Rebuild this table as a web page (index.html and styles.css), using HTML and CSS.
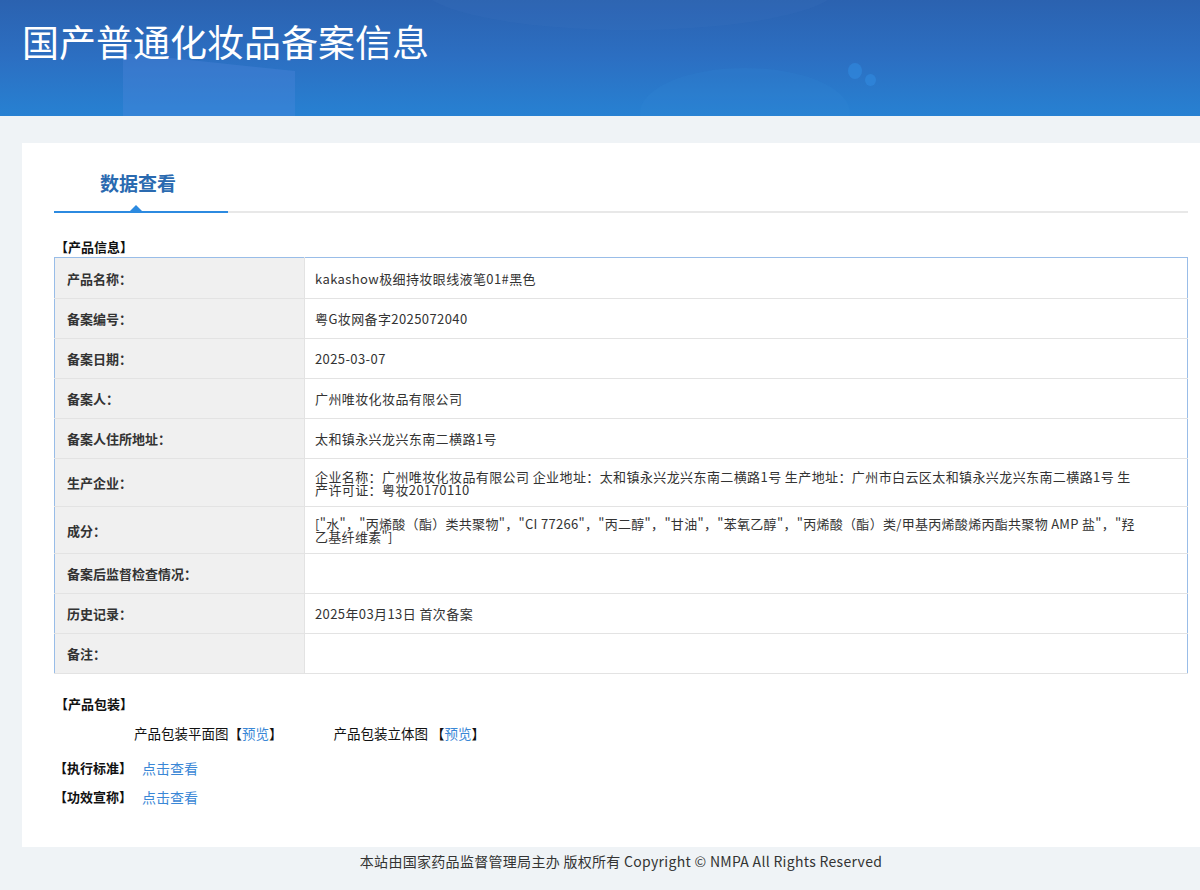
FILE: index.html
```html
<!DOCTYPE html>
<html lang="zh">
<head>
<meta charset="utf-8">
<title>国产普通化妆品备案信息</title>
<link rel="stylesheet" href="styles.css">
</head>
<body>
<header class="banner">
  <span class="deco deco-a"></span>
  <span class="deco deco-b"></span>
  <span class="deco deco-c"></span>
  <span class="dot dot-1"></span>
  <span class="dot dot-2"></span>
  <h1 class="banner-title">国产普通化妆品备案信息</h1>
</header>
<main class="page">
  <div class="tabs">
    <div class="tab active">数据查看</div>
  </div>
  <h2 class="sec-title">【产品信息】</h2>
  <table class="info">
    <tr class="first"><th>产品名称：</th><td>kakashow极细持妆眼线液笔01#黑色</td></tr>
    <tr><th>备案编号：</th><td>粤G妆网备字2025072040</td></tr>
    <tr><th>备案日期：</th><td>2025-03-07</td></tr>
    <tr><th>备案人：</th><td>广州唯妆化妆品有限公司</td></tr>
    <tr><th>备案人住所地址：</th><td>太和镇永兴龙兴东南二横路1号</td></tr>
    <tr class="tall t1"><th>生产企业：</th><td><div class="wrap">企业名称：广州唯妆化妆品有限公司 企业地址：太和镇永兴龙兴东南二横路1号 生产地址：广州市白云区太和镇永兴龙兴东南二横路1号 生产许可证：粤妆20170110</div></td></tr>
    <tr class="tall"><th>成分：</th><td><div class="wrap tight">["水"，"丙烯酸（酯）类共聚物"，"CI 77266"，"丙二醇"，"甘油"，"苯氧乙醇"，"丙烯酸（酯）类/甲基丙烯酸烯丙酯共聚物 AMP 盐"，"羟乙基纤维素"]</div></td></tr>
    <tr><th>备案后监督检查情况：</th><td></td></tr>
    <tr><th>历史记录：</th><td>2025年03月13日 首次备案</td></tr>
    <tr><th>备注：</th><td></td></tr>
  </table>
  <h2 class="sec-title pack-title">【产品包装】</h2>
  <div class="pack-row">
    <span class="pack-item">产品包装平面图【<a class="link" href="#">预览</a>】</span>
    <span class="pack-item">产品包装立体图 【<a class="link" href="#">预览</a>】</span>
  </div>
  <div class="line-row"><b class="lbl">【执行标准】</b><a class="link big" href="#">点击查看</a></div>
  <div class="line-row"><b class="lbl">【功效宣称】</b><a class="link big" href="#">点击查看</a></div>
</main>
<footer class="foot">本站由国家药品监督管理局主办 版权所有 Copyright © NMPA All Rights Reserved</footer>
</body>
</html>
```
FILE: styles.css
```css
* { box-sizing: border-box; }
html, body { margin: 0; padding: 0; }
body {
  background: #eff3f6;
  font-family: "Noto Sans CJK SC", "Noto Sans", "Liberation Sans", sans-serif;
  color: #333;
  font-size: 13px;
  width: 1242px;
}
.banner {
  position: relative;
  height: 116px;
  overflow: hidden;
  background: linear-gradient(180deg, #2b62b0 0%, #2c6fc2 50%, #2781d2 100%);
}
.deco { position: absolute; display: block; }
.deco-a {
  left: 123px; top: 62px; width: 172px; height: 70px;
  background: rgba(90, 140, 225, 0.28);
  transform: skewY(6deg);
}
.deco-b {
  left: 420px; top: -60px; width: 420px; height: 90px;
  border-radius: 50%;
  background: rgba(70, 120, 200, 0.12);
}
.deco-c {
  left: 640px; top: 68px; width: 210px; height: 90px;
  border-radius: 50%;
  background: rgba(60, 150, 220, 0.12);
}
.dot { position: absolute; border-radius: 50%; background: rgba(50, 140, 225, 0.55); }
.dot-1 { left: 848px; top: 63px; width: 14px; height: 16px; }
.dot-2 { left: 865px; top: 74px; width: 11px; height: 12px; }
.banner-title {
  position: relative;
  margin: 0;
  padding: 16px 0 0 22px;
  font-size: 37px;
  line-height: 50px;
  font-weight: 400;
  color: #fff;
}
.page {
  background: #fff;
  margin: 27px 22px 0 22px;
  padding: 20px 32px 40px 32px;
}
.tabs {
  border-bottom: 2px solid #e8e8e8;
  height: 50px;
}
.tab {
  position: relative;
  width: 174px;
  height: 50px;
  padding-left: 46px;
  font-size: 19px;
  font-weight: 700;
  line-height: 40px;
  color: #2a6ab0;
  border-bottom: 2px solid #2c8ae0;
}
.tab::after {
  content: "";
  position: absolute;
  left: 76px;
  bottom: 0;
  border-left: 6px solid transparent;
  border-right: 6px solid transparent;
  border-bottom: 6px solid #2c8ae0;
}
.sec-title {
  margin: 24px 0 0 1px;
  font-size: 13px;
  line-height: 20px;
  font-weight: 700;
  color: #111;
}
.info {
  width: 100%;
  border-collapse: collapse;
  border: 1px solid #99bde8;
}
.info th, .info td {
  border-bottom: 1px solid #e3e3e3;
  height: 40px;
  font-size: 13px;
  vertical-align: middle;
}
.info tr.first th, .info tr.first td { height: 41px; }
.info th {
  width: 250px;
  background: #f0f0f0;
  text-align: left;
  font-weight: 700;
  color: #333;
  padding: 0 12px;
  border-right: 1px solid #e3e3e3;
}
.info td {
  padding: 0 10px;
  color: #333;
  letter-spacing: 0.4px;
}
.info tr.tall th, .info tr.tall td { height: 47px; }
.info tr.t1 th, .info tr.t1 td { height: 48px; }
.wrap {
  width: 827px;
  line-height: 13px;
  word-break: break-all;
}
.wrap.tight { letter-spacing: 0.3px; }
.pack-title { margin-top: 20px; }
.pack-row {
  display: flex;
  gap: 51px;
  padding-left: 80px;
  margin-top: 9px;
  line-height: 20px;
  font-size: 13.5px;
  color: #111;
}
.link { color: #3a87d6; text-decoration: none; }
.line-row {
  margin-top: 15px;
  line-height: 20px;
  display: flex;
  gap: 10px;
  align-items: center;
  color: #111;
}
.line-row + .line-row { margin-top: 9px; }
.lbl { font-weight: 700; }
.big { font-size: 14px; }
.foot {
  text-align: center;
  font-size: 14px;
  color: #333;
  letter-spacing: 0.3px;
  padding: 3px 0 20px;
  line-height: 22px;
}
```
